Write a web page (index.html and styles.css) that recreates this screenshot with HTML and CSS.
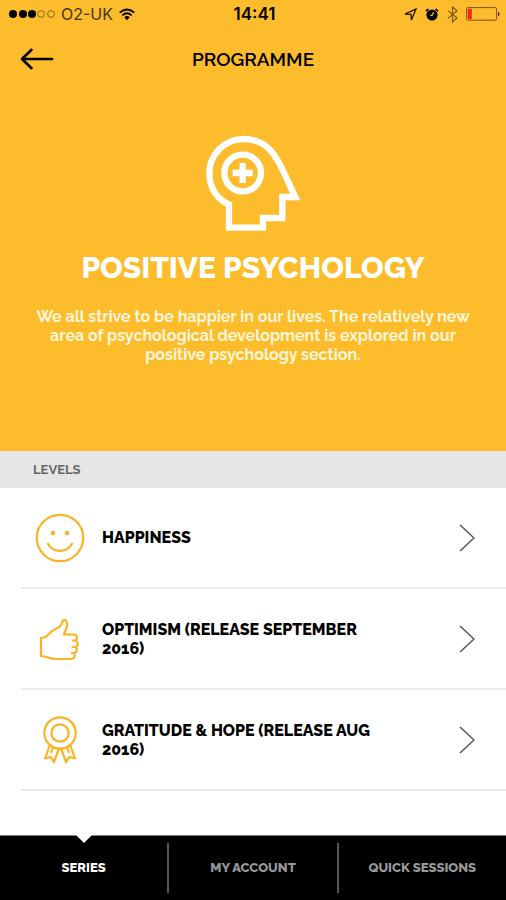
FILE: index.html
```html
<!DOCTYPE html>
<html lang="en">
<head>
    <meta charset="UTF-8">
    <meta name="viewport" content="width=device-width, initial-scale=1.0">
    <title>Positive Psychology</title>
    <link rel="stylesheet" href="styles.css">
</head>
<body>
    <header class="hero">
        <div class="status-bar">
            <div class="status-left">
                <svg width="46" height="10" viewBox="0 0 46 10">
                    <circle cx="4" cy="5" r="4"/>
                    <circle cx="14" cy="5" r="4"/>
                    <circle cx="23" cy="5" r="4"/>
                    <g fill="none" stroke="#8a6414" stroke-width="1">
                        <circle cx="32" cy="5" r="3.4"/>
                        <circle cx="42" cy="5" r="3.4"/>
                    </g>
                </svg>
                <span class="carrier">O2-UK</span>
                <svg width="16" height="13" viewBox="0 0 16 13" fill="none" stroke="#000" stroke-width="1.9">
                    <path d="M0.7 4.6 Q8 -1.8 15.3 4.6"/>
                    <path d="M3.3 7.4 Q8 3.3 12.7 7.4"/>
                    <path d="M5.3 9.2 Q8 7 10.7 9.2 L8 12.2 Z" fill="#000" stroke="none"/>
                </svg>
            </div>
            <span class="time">14:41</span>
            <div class="status-right">
                <svg width="13" height="13" viewBox="0 0 13 13">
                    <path d="M1 6.2 L12 1 L7.4 12 L7 6.4 Z" fill="none" stroke="#1c1400" stroke-width="1.3"/>
                </svg>
                <svg width="14" height="13" viewBox="0 0 14 13">
                    <circle cx="7" cy="7" r="5.6"/>
                    <path d="M1 3.2 L3.4 1 M13 3.2 L10.6 1" stroke="#000" stroke-width="1.6"/>
                    <path d="M8.6 4.2 L7 7.6 L5.2 7.2" fill="none" stroke="#fdbc2c" stroke-width="1.3"/>
                </svg>
                <svg width="11" height="17" viewBox="0 0 11 17">
                    <path d="M1 4.6 L10 12 L5.5 16 V1 L10 4.8 L1 12.4" fill="none" stroke="#7d5a10" stroke-width="1.2"/>
                </svg>
                <svg width="34" height="14" viewBox="0 0 34 14">
                    <rect x="0.6" y="0.6" width="30" height="12.6" rx="1.5" fill="none" stroke="#76550f" stroke-width="1"/>
                    <rect x="1.8" y="1.8" width="4" height="10.2" fill="#f9201c"/>
                    <path d="M32 4.5 Q35 7 32 9.5 Z" fill="#2b1e00"/>
                </svg>
            </div>
        </div>

        <div class="top-bar">
            <button type="button" class="back" aria-label="Back">
                <svg width="34" height="22" viewBox="0 0 34 22" fill="none" stroke="#000" stroke-width="2.6" stroke-linecap="round" stroke-linejoin="round">
                    <path d="M11.5 1.8 L2 11 L11.5 20.2 M2.4 11 H32"/>
                </svg>
            </button>
            <span class="top-title">PROGRAMME</span>
        </div>

        <svg class="head-icon" width="96" height="98" viewBox="46 42 288 294" fill="none" stroke="#fff" stroke-width="19">
            <path d="M118 323 H220 V294 H278 V231 H317 C298 194 282 150 262 118 C240 80 207 57 163 57 C105 57 59 102 59 160 C59 205 84 239 118 253 Z"/>
            <circle cx="159" cy="159" r="55"/>
            <path d="M159 129 V189 M129 159 H189"/>
        </svg>
        <h1>POSITIVE PSYCHOLOGY</h1>
        <p class="intro">We all strive to be happier in our lives. The relatively new area of psychological development is explored in our positive psychology section.</p>
    </header>

    <main>
        <h2>LEVELS</h2>
        <ul class="levels">
            <li>
                <a href="#">
                    <svg class="level-icon" viewBox="0 0 50 50">
                        <circle cx="25" cy="25" r="23.2"/>
                        <path d="M12.5 30 C18 40.5 32 40.5 37.5 30"/>
                        <circle class="dot" cx="18" cy="20" r="2.3"/>
                        <circle class="dot" cx="32" cy="20" r="2.3"/>
                    </svg>
                    <span class="level-name">HAPPINESS</span>
                    <svg class="chevron" viewBox="0 0 16 28"><path d="M1 1 L15 14 L1 27"/></svg>
                </a>
            </li>
            <li>
                <a href="#">
                    <svg class="level-icon" viewBox="0 0 50 50">
                        <path d="M6 24 L11 23 C15 18 19 15.5 23.5 13.5 C27 11.5 27 7.5 28.5 6 C31.5 5.5 32.5 9 32 12 C31.5 15 30 17 29 20.5 H39 C42 20.5 43 24.5 40.5 26.5 C43.5 28 43.5 32 40.5 33 C43 35 42 38.5 39 39 C41 42 39 45 36 45 H20 C15 45 12 42 6 42 Z"/>
                        <path d="M37 26.5 H40.5 M36.5 33 H40.5 M36 39 H39"/>
                    </svg>
                    <span class="level-name">OPTIMISM (RELEASE SEPTEMBER 2016)</span>
                    <svg class="chevron" viewBox="0 0 16 28"><path d="M1 1 L15 14 L1 27"/></svg>
                </a>
            </li>
            <li>
                <a href="#">
                    <svg class="level-icon" viewBox="0 0 50 50">
                        <circle cx="25" cy="18" r="15.7"/>
                        <circle cx="25" cy="18" r="8.7"/>
                        <path d="M14.5 31 L10 43.5 L15.5 42 L19 47 L24 33.5 M18 32.5 L16 38"/>
                        <path d="M35.5 31 L40 43.5 L34.5 42 L31 47 L26 33.5 M32 32.5 L34 38"/>
                    </svg>
                    <span class="level-name">GRATITUDE &amp; HOPE (RELEASE AUG 2016)</span>
                    <svg class="chevron" viewBox="0 0 16 28"><path d="M1 1 L15 14 L1 27"/></svg>
                </a>
            </li>
        </ul>
    </main>

    <nav class="tabs">
        <a href="#" class="active">SERIES</a>
        <a href="#">MY ACCOUNT</a>
        <a href="#">QUICK SESSIONS</a>
    </nav>
</body>
</html>
```

FILE: styles.css
```css
* {
    box-sizing: border-box;
}

body {
    margin: 0;
    min-height: 100vh;
    display: flex;
    flex-direction: column;
    font-family: Raleway, Lato, sans-serif;
    background-color: #fff;
    color: #000;
}

svg {
    display: block;
    flex: none;
}

.hero {
    background-color: #fdbc2c;
    padding-bottom: 87px;
    text-align: center;
}

.status-bar {
    display: grid;
    grid-template-columns: 1fr auto 1fr;
    align-items: center;
    height: 28px;
    padding: 0 6px 0 9px;
    font-family: Inter, sans-serif;
}

.status-left,
.status-right {
    display: flex;
    align-items: center;
    gap: 6px;
}

.status-right {
    justify-content: flex-end;
    gap: 8px;
}

.carrier {
    font-size: 16px;
    color: #4a3508;
}

.time {
    font-size: 17px;
    font-weight: 600;
}

.top-bar {
    display: grid;
    grid-template-columns: 1fr auto 1fr;
    align-items: center;
    height: 62px;
    padding: 0 20px;
}

.back {
    justify-self: start;
    padding: 0;
    border: none;
    background: none;
    cursor: pointer;
}

.top-title {
    font-size: 19px;
    font-weight: 600;
}

.head-icon {
    margin: 44px auto 16px;
}

h1 {
    margin: 0;
    font-size: 30px;
    line-height: 40px;
    font-weight: 800;
    color: #fff;
}

.intro {
    max-width: 450px;
    margin: 19px auto 0;
    font-size: 16px;
    line-height: 19px;
    font-weight: bold;
    color: #fff6d8;
}

h2 {
    margin: 0;
    padding: 0 33px;
    font-size: 13px;
    line-height: 37px;
    font-weight: bold;
    color: #666;
    background-color: #e6e6e6;
}

.levels {
    margin: 0;
    padding: 0 0 0 21px;
    list-style: none;
}

.levels li {
    border-bottom: 2px solid #ebebeb;
}

.levels a {
    display: flex;
    align-items: center;
    min-height: 99px;
    padding: 0 31px 0 14px;
    color: #000;
    text-decoration: none;
}

.level-icon {
    width: 50px;
    height: 50px;
    fill: none;
    stroke: #fbb324;
    stroke-width: 2.2;
    stroke-linejoin: round;
}

.level-icon .dot {
    fill: #fbb324;
    stroke: none;
}

.level-name {
    flex: 1;
    margin: 0 70px 0 17px;
    font-size: 16px;
    line-height: 19px;
    font-weight: 800;
}

.chevron {
    width: 16px;
    height: 28px;
    fill: none;
    stroke: #555;
    stroke-width: 1.5;
}

.tabs {
    display: flex;
    margin-top: auto;
    padding: 7px 0;
    background-color: #000;
    border-top: 1px solid #777;
}

.tabs a {
    position: relative;
    flex: 1;
    font-size: 13px;
    line-height: 50px;
    font-weight: 800;
    text-align: center;
    color: #999;
    text-decoration: none;
    border-right: 2px solid #555;
}

.tabs a:last-child {
    border-right: none;
}

.tabs .active {
    color: #fff;
}

/* notch pointing at the open tab */
.tabs .active::before {
    content: "";
    position: absolute;
    top: -8px;
    left: 50%;
    margin-left: -8px;
    border: 8px solid transparent;
    border-top-color: #fff;
    border-bottom: none;
}
```
